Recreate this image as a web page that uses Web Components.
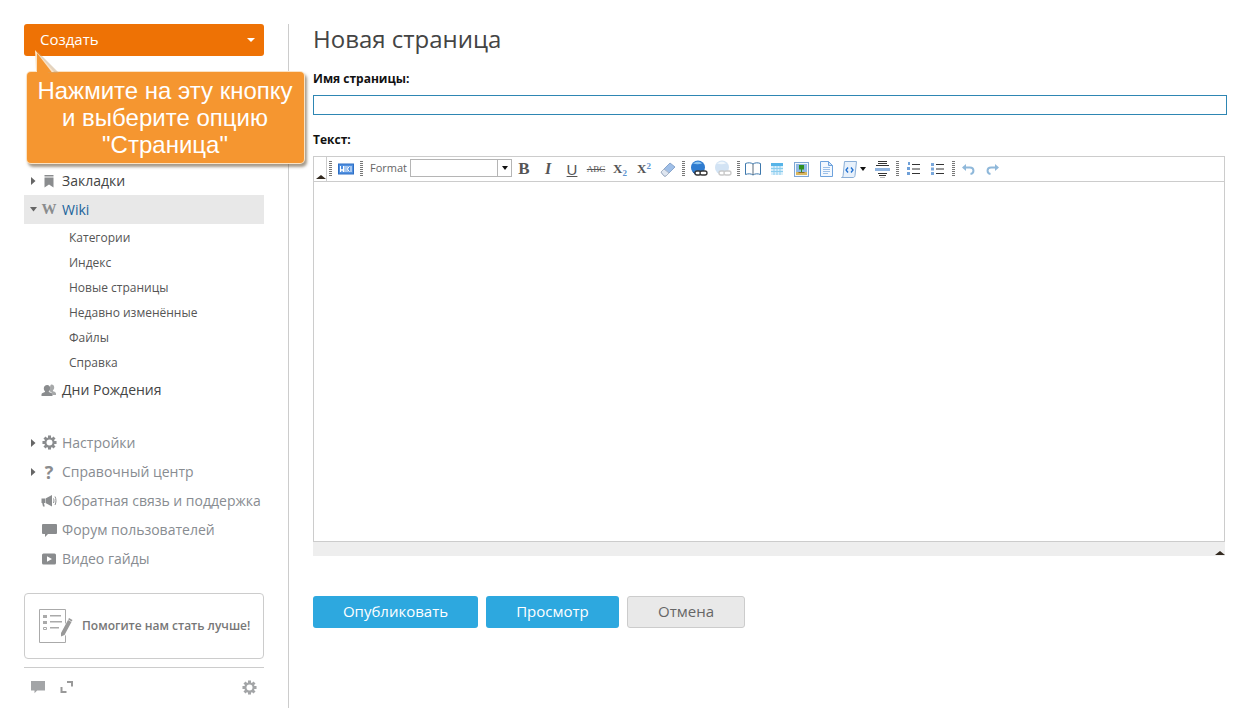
<!DOCTYPE html>
<html lang="ru">
<head>
<meta charset="utf-8">
<title>Новая страница</title>
<style>
html, body { margin: 0; height: 100%; background: #fff; overflow: hidden; font-family: "Open Sans", sans-serif; }
</style>
</head>
<body>
<app-page>
    <side-bar slot="side"></side-bar>
    <page-form slot="main"></page-form>
</app-page>

<script>
const GEAR = `<svg viewBox="0 0 16 16" width="15" height="15"><g fill="currentColor">${[0, 45, 90, 135].map((a) => `<rect x="6.400" y="0.500" width="3.200" height="15" transform="rotate(${a} 8 8)"/>`).join('')}</g><circle cx="8" cy="8" r="4.400" fill="none" stroke="currentColor" stroke-width="2.200"/><circle cx="8" cy="8" r="3.200" fill="#fff"/></svg>`;

const NAV_ICONS = {
    bookmark: '<svg viewBox="0 0 16 16" width="16" height="16"><path fill="currentColor" d="M3.500 2h9v1.500h-9zM3.500 4.500h9V14.500L8 11.500l-4.500 3z"/></svg>',
    wiki: '<span style="font:bold 15px \'Liberation Serif\',serif">W</span>',
    people: '<svg viewBox="0 0 16 16" width="16" height="16"><path fill="currentColor" opacity=".75" d="M10.500 2.500c1.700 0 2.700 1.300 2.700 3 0 1.300-.6 2.300-1.300 2.900v.8c1.500.4 3.100 1.100 3.100 2.300v1.500h-3.500c0-2-1.400-3-3.300-3.700.9-1 1.100-2.500.8-4 .2-1.700.7-2.800 1.300-2.800z"/><path fill="currentColor" d="M6.200 3c1.900 0 3 1.400 3 3.200 0 1.300-.6 2.400-1.400 3v.9c1.800.4 3.700 1.200 3.700 2.400V14H.5v-1.500c0-1.200 1.900-2 3.500-2.400v-.9C3.300 8.600 2.800 7.500 2.800 6.200 2.800 4.400 4.200 3 6.200 3z"/></svg>',
    gear: GEAR,
    help: '<span style="font:bold 18px \'Open Sans\',sans-serif">?</span>',
    horn: '<svg viewBox="0 0 16 16" width="16" height="16"><path fill="currentColor" d="M.5 5.500h3.500v4.500H3l.7 3.500H2l-.8-3.500H.5zM4.500 5.500L11 2v11.500L4.500 10z"/><path fill="none" stroke="currentColor" d="M12.500 5.500c.6 1.400.6 3 0 4.500M14 3.500c1.300 2.500 1.300 6 0 8.500"/></svg>',
    chat: '<svg viewBox="0 0 16 16" width="16" height="16"><path fill="currentColor" d="M2 2h13a1 1 0 0 1 1 1v8a1 1 0 0 1-1 1H7l-3 3v-3H2a1 1 0 0 1-1-1V3a1 1 0 0 1 1-1z"/></svg>',
    video: '<svg viewBox="0 0 16 16" width="16" height="16"><path fill="currentColor" fill-rule="evenodd" d="M2.500 2.500h11A1.500 1.500 0 0 1 15 4v8a1.500 1.500 0 0 1-1.500 1.500h-11A1.500 1.500 0 0 1 1 12V4a1.500 1.500 0 0 1 1.500-1.500zM6 5.200v5.600L11 8z"/></svg>'
};

class AppPage extends HTMLElement {
    constructor() {
        super();
        this.attachShadow({ mode: 'open' });
        this.shadowRoot.innerHTML = `
            <style>
                :host { display: flex; height: 708px; box-sizing: border-box; padding: 24px 0 0 24px; }
                .side { width: 240px; flex: none; padding-right: 24px; border-right: 1px solid #ccc; }
                .main { flex: 1; padding-left: 24px; padding-right: 13px; min-width: 0; }
            </style>
            <div class="side"><slot name="side"></slot></div>
            <div class="main"><slot name="main"></slot></div>
        `;
    }
}

class NavItem extends HTMLElement {
    constructor() {
        super();
        this.attachShadow({ mode: 'open' });
    }

    connectedCallback() {
        const arrow = this.getAttribute('arrow');
        const icon = NAV_ICONS[this.getAttribute('icon')] || '';
        this.shadowRoot.innerHTML = `
            <style>
                :host { display: flex; align-items: center; height: 29px; font-size: 14px; color: var(--nav-color, #444); white-space: nowrap; }
                :host([active]) { background: #e8e8e8; color: #22649b; }
                .arrow { width: 17px; padding-left: 6px; box-sizing: border-box; display: flex; color: #666; }
                .icon { width: 16px; height: 16px; margin-right: 5px; display: flex; align-items: center; justify-content: center; color: #8a8c8e; }
            </style>
            <span class="arrow">${arrow === 'right' ? '<svg width="6" height="8" style="margin-left:1px"><path fill="currentColor" d="M0 0l4.500 4L0 8z"/></svg>' : ''}${arrow === 'down' ? '<svg width="7" height="5"><path fill="currentColor" d="M0 0h7L3.500 4.500z"/></svg>' : ''}</span>
            <span class="icon">${icon}</span>
            <slot></slot>
        `;
    }
}

class CreateButton extends HTMLElement {
    constructor() {
        super();
        this.attachShadow({ mode: 'open' });
        this.shadowRoot.innerHTML = `
            <style>
                :host { display: flex; align-items: center; justify-content: space-between; height: 32px; box-sizing: border-box; padding: 0 9px 2px 16px; background: #ee7205; border-radius: 3px; color: #fff; font-size: 15px; }
                i { width: 0; height: 0; margin-top: 2px; border: 4px solid transparent; border-top-color: #fff; border-bottom: 0; }
            </style>
            <slot></slot><i></i>
        `;
    }
}

class HintCallout extends HTMLElement {
    constructor() {
        super();
        this.attachShadow({ mode: 'open' });
        this.shadowRoot.innerHTML = `
            <style>
                :host { position: absolute; left: 27px; top: 72px; width: 277px; height: 91px; box-sizing: border-box; padding: 5px 1px 0 0; background: #f59630; border-radius: 4px; color: #fff; text-align: center; font: 24px/27px "Liberation Sans", sans-serif; box-shadow: 0 0 0 1px #fbe3c4, 2px 3px 3px 1px rgba(90,70,40,.55); }
                svg { position: absolute; left: 7px; top: -22px; overflow: visible; }
            </style>
            <svg width="22" height="23"><path fill="#c9a77d" opacity=".5" d="M3 1l22 22H14z"/><path fill="#fbe3c4" d="M1 0l19 22H2z"/><path fill="#f59630" d="M3 3l15 19.500H3z"/></svg>
            <slot></slot>
        `;
    }
}

class SideBar extends HTMLElement {
    constructor() {
        super();
        this.attachShadow({ mode: 'open' });
        this.shadowRoot.innerHTML = `
            <style>
                :host { display: block; font-size: 14px; }
                .top { margin-top: 110px; }
                .sub { padding: 1px 0 0 45px; }
                .sub div { height: 25px; line-height: 25px; font-size: 12px; color: #555; }
                .lower { --nav-color: #888c91; margin-top: 24px; }
                .help { display: flex; align-items: center; height: 66px; box-sizing: border-box; margin-top: 19.500px; padding-left: 13px; border: 1px solid #ccc; border-radius: 4px; font-size: 12px; font-weight: 600; color: #777; white-space: nowrap; }
                .help svg { margin-right: 8px; flex: none; }
                .foot { display: flex; align-items: center; height: 39px; margin-top: 8px; padding: 0 7px; border-top: 1px solid #ccc; color: #999; }
                .foot svg { display: block; }
                .expand { margin-left: 15px; }
                .gear { margin-left: auto; }
            </style>
            <create-button>Создать</create-button>
            <hint-callout>Нажмите на эту кнопку<br>и выберите опцию<br>"Страница"</hint-callout>
            <div class="top">
                <nav-item arrow="right" icon="bookmark">Закладки</nav-item>
                <nav-item arrow="down" icon="wiki" active>Wiki</nav-item>
                <div class="sub">
                    <div>Категории</div>
                    <div>Индекс</div>
                    <div>Новые страницы</div>
                    <div>Недавно изменённые</div>
                    <div>Файлы</div>
                    <div>Справка</div>
                </div>
                <nav-item icon="people">Дни Рождения</nav-item>
            </div>
            <div class="lower">
                <nav-item arrow="right" icon="gear">Настройки</nav-item>
                <nav-item arrow="right" icon="help">Справочный центр</nav-item>
                <nav-item icon="horn">Обратная связь и поддержка</nav-item>
                <nav-item icon="chat">Форум пользователей</nav-item>
                <nav-item icon="video">Видео гайды</nav-item>
            </div>
            <div class="help">
                <svg width="36" height="36" viewBox="0 0 36 36">
                    <path fill="none" stroke="#aaa" d="M1.500 1.500h26v33h-26z"/>
                    <path fill="#aaa" d="M5 7h4v3H5zM12 7h11v1.500H12zM5 13h4v3H5zM12 13h12v1.500H12zM12 19h9v1.500H12z"/>
                    <path fill="none" stroke="#aaa" d="M5.500 19.500h3v2h-3z"/>
                    <path fill="#fff" d="M21 27l9-16 5 3-9 16-5 2z"/>
                    <path fill="#999" d="M23 25l7-13 3.500 2-7 13-3.500 1.500zM31 10l3.500 2-.8 1.500-3.500-2z"/>
                </svg>
                <span>Помогите нам стать лучше!</span>
            </div>
            <div class="foot">
                <svg width="14" height="14" viewBox="0 0 16 16" style="color:#a3a5a7"><path fill="currentColor" d="M0 1h16v11H7l-3 3v-3H0z"/></svg>
                <svg class="expand" width="14" height="14" viewBox="0 0 14 14"><path fill="none" stroke="#999" stroke-width="2" d="M7 2h5v4.500M1.500 7V12H6.500"/></svg>
                <span class="gear" style="display:flex;color:#a3a5a7">${GEAR}</span>
            </div>
        `;
    }
}

class ActionButton extends HTMLElement {
    constructor() {
        super();
        this.attachShadow({ mode: 'open' });
        this.shadowRoot.innerHTML = `
            <style>
                :host { display: flex; align-items: center; justify-content: center; height: 32px; box-sizing: border-box; padding-bottom: 2px; border-radius: 3px; background: #2da8df; color: #fff; font-size: 15px; }
                :host([plain]) { background: #e9e9e9; border: 1px solid #ccc; color: #666; }
            </style>
            <slot></slot>
        `;
    }
}

// toolbar: [kind, width, icon or text]
const TOOL_ICONS = {
    wiki: '<svg width="16" height="12"><rect width="16" height="11" y=".5" fill="#2f6fc4"/><rect x="1" y="1.500" width="14" height="9" fill="#4f8fe0"/><path fill="none" stroke="#fff" d="M2.500 3v6l1.500-3 1.500 3V3M7 3v6M9 3v6M9.500 6l2-3M9.500 6l2 3M13 3v6"/></svg>',
    eraser: '<svg width="18" height="18"><path fill="#9fbfe8" stroke="#8aa6cc" d="M2 12l9-9 5 4-9 9H5z"/><path fill="#dfe6f0" stroke="#a9b5c6" d="M2 12l3-3 5 4-3 3H5z"/></svg>',
    link: '<svg width="18" height="18"><circle cx="8" cy="7.500" r="7" fill="#2f7cd0"/><path fill="#8cc4f0" d="M3 3.500c3-2.500 7-2.500 9 0-3 1-6 1-9 0z"/><path fill="#1d4f8f" d="M2 11c3 2 8 2 11 .5l-2 3H5z"/><g fill="#fff" stroke="#333" stroke-width="1.300"><rect x="5" y="11" width="6" height="4" rx="2"/><rect x="10" y="11" width="7" height="4" rx="2"/></g></svg>',
    unlink: '<svg width="18" height="18" opacity=".45"><circle cx="8" cy="7.500" r="7" fill="#9cc3e8"/><path fill="#e0eefa" d="M3 3.500c3-2.500 7-2.500 9 0-3 1-6 1-9 0z"/><g fill="#fff" stroke="#888" stroke-width="1.300"><rect x="5" y="11" width="6" height="4" rx="2"/><rect x="10" y="11" width="7" height="4" rx="2"/></g></svg>',
    book: '<svg width="16" height="15"><path fill="#fff" stroke="#3d78ad" d="M.5 1.500C3 .5 6 .5 8 2c2-1.500 5-1.500 7.500-.5v11c-2.500-1-5.500-1-7.500.5-2-1.500-5-1.500-7.500-.5z"/><path stroke="#5d6c7a" d="M8 2v11"/></svg>',
    table: '<svg width="12" height="12"><rect width="12" height="12" fill="#d8eefb"/><rect width="12" height="3" fill="#56b4e8"/><path stroke="#8ccdee" d="M0 5.500h12M0 8.500h12M3 3v9M6 3v9M9 3v9"/></svg>',
    image: '<svg width="15" height="15"><rect x=".5" y=".5" width="14" height="14" fill="#f4f8fc" stroke="#7ea6d4"/><rect x="2" y="2" width="11" height="11" fill="#8fb8e4"/><rect x="2" y="10" width="11" height="3" fill="#d8b65e"/><path fill="#2f8f1f" d="M5 3h5v4.500H8v3H7v-3H5z"/><path fill="#8a6a2a" d="M4.500 10h6v1h-6z"/></svg>',
    doc: '<svg width="13" height="16"><path fill="#f3f8fe" stroke="#6ea2dc" d="M.5.5h8l4 4v11H.5z"/><path fill="#cfe2f7" stroke="#6ea2dc" d="M8.500.5v4h4z"/><path stroke="#9cc0e8" d="M3 6.500h7M3 8.500h7M3 10.500h7M3 12.500h5"/></svg>',
    source: '<svg width="16" height="17"><path fill="#e8f1fb" stroke="#8aaed6" d="M3.500.5h12l-1.500 14c-.2 1.500-1 2-2 2H.5c1 0 1.500-.8 1.600-2z"/><path fill="none" stroke="#1f6fd0" stroke-width="1.300" d="M7 6.500L5 9l2 2.500M10 6.500L12 9l-2 2.500"/></svg>',
    align: '<svg width="15" height="17"><path stroke="#333" d="M3 .5h9M3 2.500h9M1 4.500h13M3 12.500h9M4 14.500h7"/><rect y="7" width="15" height="3" fill="#8fb4e0"/><path stroke="#bbb" d="M5 16.500h5"/></svg>',
    ol: '<svg width="13" height="14"><g fill="#6fa0d8"><rect x="1" y="0" width="2" height="3"/><rect x="0" y="5" width="3" height="3"/><rect x="0" y="10" width="3" height="3"/></g><path stroke="#333" d="M5 2.500h8M5 7h8M5 11.500h8"/></svg>',
    ul: '<svg width="13" height="14"><g fill="#7aa8dc"><rect x="0" y="1" width="3" height="3"/><rect x="0" y="5.500" width="3" height="3"/><rect x="0" y="10" width="3" height="3"/></g><path stroke="#333" d="M5 2.500h8M5 7h8M5 11.500h8"/></svg>',
    undo: '<svg width="13" height="11"><path fill="none" stroke="#8fb8da" stroke-width="2" d="M2 3.500h6c4.500 0 4.500 6 .5 6.500"/><path fill="#8fb8da" d="M0 3.500L4 0v7z"/></svg>',
    redo: '<svg width="13" height="11"><path fill="none" stroke="#8fb8da" stroke-width="2" d="M11 3.500H5C.5 3.500.5 9.500 4.500 10"/><path fill="#8fb8da" d="M13 3.500L9 0v7z"/></svg>'
};

const TOOLS = [
    ['grip', 6], ['icon', 26, 'wiki'], ['grip', 5], ['label', 46, 'Format'], ['select', 102],
    ['text', 24, 'B', "font:bold 17px 'Liberation Serif',serif"],
    ['text', 24, 'I', "font:italic bold 16px 'Liberation Serif',serif"],
    ['text', 24, 'U', "font:15px 'Liberation Sans',sans-serif;text-decoration:underline"],
    ['text', 24, 'ABC', "font:9px 'Liberation Serif',serif;text-decoration:line-through"],
    ['text', 24, 'X<sub>2</sub>', "font:bold 13px 'Liberation Serif',serif"],
    ['text', 24, 'X<sup>2</sup>', "font:bold 13px 'Liberation Serif',serif"],
    ['icon', 24, 'eraser'], ['grip', 7], ['icon', 24, 'link'], ['icon', 24, 'unlink'], ['grip', 6],
    ['icon', 24, 'book'], ['icon', 24, 'table'], ['icon', 25, 'image'], ['icon', 24, 'doc'], ['icon', 22, 'source'],
    ['arrow', 10], ['icon', 24, 'align'], ['grip', 7], ['icon', 24, 'ol'], ['icon', 24, 'ul'], ['grip', 8],
    ['icon', 23, 'undo'], ['icon', 24, 'redo']
];

class EditorToolbar extends HTMLElement {
    constructor() {
        super();
        this.attachShadow({ mode: 'open' });
        const items = TOOLS.map(([kind, w, val, css]) => {
            const st = `width:${w}px;`;
            if (kind === 'grip') return `<span class="cell" style="${st}"><i class="grip"></i></span>`;
            if (kind === 'icon') return `<span class="cell" style="${st}">${TOOL_ICONS[val]}</span>`;
            if (kind === 'label') return `<span class="cell label" style="${st}">${val}</span>`;
            if (kind === 'text') return `<span class="cell txt" style="${st}${css}"><span>${val}</span></span>`;
            if (kind === 'arrow') return `<span class="cell" style="${st}justify-content:flex-start"><i class="tri"></i></span>`;
            return `<span class="select" style="${st}"><b></b><i class="tri"></i></span>`;
        }).join('');
        this.shadowRoot.innerHTML = `
            <style>
                :host { display: flex; align-items: center; height: 24px; border-bottom: 1px solid #ccc; }
                .fold { width: 13px; height: 24px; flex: none; box-sizing: border-box; border-right: 1px solid #ccc; position: relative; }
                .fold::after { content: ""; position: absolute; left: 2px; bottom: 2px; width: 0; height: 0; border: 5px solid transparent; border-bottom: 4px solid #332a20; border-top: 0; }
                .cell { display: flex; align-items: center; justify-content: center; flex: none; height: 24px; color: #555; }
                .cell svg { display: block; }
                .label { justify-content: flex-start; padding: 0 0 3px 6px; box-sizing: border-box; font: 11px "Open Sans", sans-serif; color: #666; }
                .txt { color: #555; }
                .txt sub, .txt sup { color: #5c94d0; font-size: 9px; line-height: 0; vertical-align: baseline; position: relative; }
                .txt sub { top: 3px; }
                .txt sup { top: -4px; }
                .grip { display: block; width: 3px; height: 16px; background: repeating-linear-gradient(#777 0 1px, transparent 1px 2px); }
                .tri { display: block; width: 0; height: 0; border: 3.500px solid transparent; border-top: 4px solid #111; border-bottom: 0; }
                .select { display: flex; height: 18px; box-sizing: border-box; flex: none; margin-bottom: 2px; border: 1px solid #b5b5b5; background: #fff; }
                .select b { flex: 1; border-right: 1px solid #b5b5b5; }
                .select .tri { margin: 6px 3px 0 4px; }
            </style>
            <span class="fold"></span>
            ${items}
        `;
    }
}

class PageForm extends HTMLElement {
    constructor() {
        super();
        this.attachShadow({ mode: 'open' });
        this.shadowRoot.innerHTML = `
            <style>
                :host { display: block; }
                h1 { margin: 0; height: 46px; font: 400 24px/29px "Open Sans", sans-serif; color: #444; }
                label { display: block; height: 25px; font: 700 12px/17px "Open Sans", sans-serif; color: #111; }
                .name { height: 20px; box-sizing: border-box; border: 1px solid #2e86b3; margin-bottom: 16px; }
                .editor { width: 912px; height: 386px; box-sizing: border-box; border: 1px solid #ccc; }
                .grow { height: 14px; width: 912px; background: #eee; position: relative; }
                .grow::after { content: ""; position: absolute; right: 0; bottom: 1px; width: 0; height: 0; border: 5px solid transparent; border-bottom: 4px solid #332a20; border-top: 0; }
                .actions { display: flex; gap: 8px; margin-top: 40px; }
            </style>
            <h1>Новая страница</h1>
            <label>Имя страницы:</label>
            <div class="name"></div>
            <label>Текст:</label>
            <div class="editor"><editor-toolbar></editor-toolbar></div>
            <div class="grow"></div>
            <div class="actions">
                <action-button style="width:165px">Опубликовать</action-button>
                <action-button style="width:133px">Просмотр</action-button>
                <action-button style="width:118px" plain>Отмена</action-button>
            </div>
        `;
    }
}

customElements.define('app-page', AppPage);
customElements.define('nav-item', NavItem);
customElements.define('create-button', CreateButton);
customElements.define('hint-callout', HintCallout);
customElements.define('side-bar', SideBar);
customElements.define('action-button', ActionButton);
customElements.define('editor-toolbar', EditorToolbar);
customElements.define('page-form', PageForm);
</script>
</body>
</html>
